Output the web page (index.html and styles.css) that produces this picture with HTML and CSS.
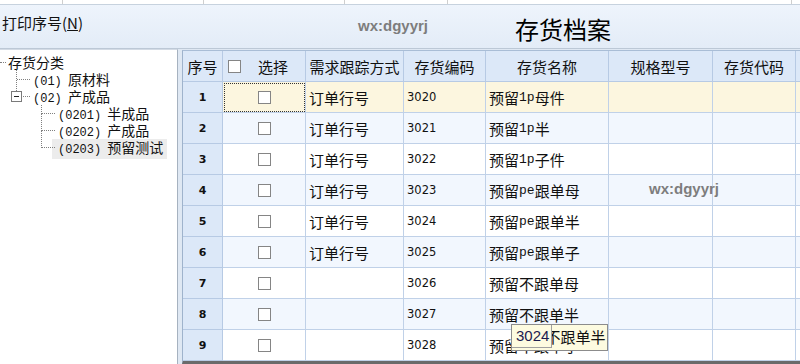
FILE: index.html
```html
<!DOCTYPE html>
<html lang="zh-CN">
<head>
    <meta charset="UTF-8">
    <title>存货档案</title>
    <link rel="stylesheet" href="styles.css">
</head>
<body>

    <div class="topstrip">
        <span></span><span></span><span></span><span></span><span></span>
    </div>

    <div class="toolbar">
        <span class="print-label">打印序号(<u>N</u>)</span>
        <span class="mark">wx:dgyyrj</span>
        <h1 class="title">存货档案</h1>
    </div>

    <div class="main">
        <div class="tree">
            <div class="node lv0">存货分类</div>
            <div class="node lv1 first"><span class="code">(01)</span> 原材料</div>
            <div class="node lv1"><i class="toggle"></i><span class="code">(02)</span> 产成品</div>
            <div class="node lv2 first"><span class="code">(0201)</span> 半成品</div>
            <div class="node lv2"><span class="code">(0202)</span> 产成品</div>
            <div class="node lv2"><span class="label selected"><span class="code">(0203)</span> 预留测试</span></div>
        </div>

        <div class="grid">
            <div class="row hd">
                <div>序号</div>
                <div class="sel"><span class="cb"></span><span class="sel-text">选择</span></div>
                <div>需求跟踪方式</div>
                <div>存货编码</div>
                <div>存货名称</div>
                <div>规格型号</div>
                <div>存货代码</div>
                <div></div>
            </div>

            <div class="row current">
                <div class="no">1</div>
                <div class="chk focus"><span class="cb"></span></div>
                <div>订单行号</div>
                <div class="num">3020</div>
                <div>预留<span class="lat">1p</span>母件</div>
                <div></div><div></div><div></div>
            </div>
            <div class="row alt">
                <div class="no">2</div>
                <div class="chk"><span class="cb"></span></div>
                <div>订单行号</div>
                <div class="num">3021</div>
                <div>预留<span class="lat">1p</span>半</div>
                <div></div><div></div><div></div>
            </div>
            <div class="row">
                <div class="no">3</div>
                <div class="chk"><span class="cb"></span></div>
                <div>订单行号</div>
                <div class="num">3022</div>
                <div>预留<span class="lat">1p</span>子件</div>
                <div></div><div></div><div></div>
            </div>
            <div class="row alt">
                <div class="no">4</div>
                <div class="chk"><span class="cb"></span></div>
                <div>订单行号</div>
                <div class="num">3023</div>
                <div>预留<span class="lat">pe</span>跟单母</div>
                <div></div><div></div><div></div>
            </div>
            <div class="row">
                <div class="no">5</div>
                <div class="chk"><span class="cb"></span></div>
                <div>订单行号</div>
                <div class="num">3024</div>
                <div>预留<span class="lat">pe</span>跟单半</div>
                <div></div><div></div><div></div>
            </div>
            <div class="row alt">
                <div class="no">6</div>
                <div class="chk"><span class="cb"></span></div>
                <div>订单行号</div>
                <div class="num">3025</div>
                <div>预留<span class="lat">pe</span>跟单子</div>
                <div></div><div></div><div></div>
            </div>
            <div class="row">
                <div class="no">7</div>
                <div class="chk"><span class="cb"></span></div>
                <div></div>
                <div class="num">3026</div>
                <div>预留不跟单母</div>
                <div></div><div></div><div></div>
            </div>
            <div class="row alt">
                <div class="no">8</div>
                <div class="chk"><span class="cb"></span></div>
                <div></div>
                <div class="num">3027</div>
                <div>预留不跟单半</div>
                <div></div><div></div><div></div>
            </div>
            <div class="row">
                <div class="no">9</div>
                <div class="chk"><span class="cb"></span></div>
                <div></div>
                <div class="num">3028</div>
                <div>预留不跟单子</div>
                <div></div><div></div><div></div>
            </div>

            <span class="mark mark2">wx:dgyyrj</span>

            <div class="tip">
                <span class="tip-code">3024</span>
                <span class="tip-rest"><span>不跟单半</span></span>
            </div>
        </div>
    </div>

</body>
</html>
```

FILE: styles.css
```css
body {
    margin: 0;
    width: 800px;
    height: 364px;
    overflow: hidden;
    font-family: "Noto Sans CJK SC", sans-serif;
    color: #111;
    background-color: #dfe8f3;
}

/* remnant of the grid above */
.topstrip {
    height: 4px;
    display: grid;
    grid-template-columns: 63px 141px 141px 103px 344px;
    background-color: #fff;
    border-bottom: 1px solid #c7d2de;
}

.topstrip span {
    border-right: 1px solid #cfcfcf;
}

.toolbar {
    height: 43px;
    display: grid;
    grid-template-columns: 356px 157px auto;
    align-items: start;
    padding-left: 2px;
    background: linear-gradient(#eef4fc, #e3ecf7);
    border-bottom: 1px solid #bcc8d6;
}

.print-label {
    font-size: 15px;
    line-height: 20px;
    margin-top: 8px;
}

.mark {
    font-family: "Liberation Sans", sans-serif;
    font-weight: bold;
    font-size: 15px;
    line-height: 20px;
    color: #7d7d7d;
    margin-top: 11px;
}

.title {
    margin: 9px 0 0;
    font-size: 24px;
    font-weight: normal;
    line-height: 30px;
    color: #000;
}

.main {
    display: flex;
    height: 315px;
}

/* category tree */
.tree {
    width: 177px;
    padding-top: 4px;
    background-color: #fff;
    border-top: 1px solid #d3dbe5;
    border-right: 1px solid #a6b2c0;
    font-size: 14px;
}

.node {
    position: relative;
    height: 17px;
    line-height: 17px;
    white-space: nowrap;
}

.node::before {
    content: "";
    position: absolute;
    top: 8px;
    border-top: 1px dotted #808080;
}

.node.lv1::after,
.node.lv2::after {
    content: "";
    position: absolute;
    top: -8px;
    height: 17px;
    border-left: 1px dotted #808080;
}

.lv0 {
    padding-left: 8px;
}

.lv0::before {
    left: 0;
    width: 6px;
}

.lv1 {
    padding-left: 33px;
}

.lv1::before {
    left: 17px;
    width: 13px;
}

.node.lv1::after {
    left: 16px;
}

.lv2 {
    padding-left: 58px;
}

.lv2::before {
    left: 42px;
    width: 13px;
}

.node.lv2::after {
    left: 41px;
}

.node.lv1.first::after {
    top: -1px;
    height: 9px;
}

.node.lv2.first::after {
    top: 0;
    height: 9px;
}

.toggle {
    position: absolute;
    left: 11px;
    top: 3px;
    width: 9px;
    height: 9px;
    border: 1px solid #7a7a7a;
    background-color: #fff;
    z-index: 1;
}

.toggle::after {
    content: "";
    position: absolute;
    left: 2px;
    top: 4px;
    width: 5px;
    height: 1px;
    background-color: #222;
}

.code {
    font-family: "Liberation Mono", monospace;
    font-size: 12px;
    margin-right: 3px;
}

.label.selected {
    display: inline-block;
    margin-left: -6px;
    padding: 0 4px 0 6px;
    background-color: #ececec;
}

/* data grid */
.grid {
    position: relative;
    flex: 1;
    margin-left: 4px;
    margin-top: 1px;
    overflow: hidden;
    background-color: #fff;
    border-left: 1px solid #9fb3cc;
    border-top: 1px solid #a9bdd6;
    border-bottom: 3px solid #6a6a6a;
}

.row {
    display: grid;
    grid-template-columns: 40px 83px 98px 82px 123px 104px 83px 100px;
    height: 31px;
    font-size: 15px;
}

.row > div {
    box-sizing: border-box;
    display: flex;
    align-items: center;
    padding-left: 3px;
    overflow: hidden;
    white-space: nowrap;
    border-right: 1px solid #c0d1e8;
    border-bottom: 1px solid #c0d1e8;
}

.row.alt > div {
    background-color: #f2f7fe;
}

.row.current > div {
    background-color: #fcf6df;
}

.row.hd > div {
    justify-content: center;
    padding-left: 0;
    background-color: #dce8f8;
    border-color: #b7cae4;
}

.row.hd > div.sel {
    justify-content: flex-start;
    padding-left: 5px;
}

.sel-text {
    margin-left: 17px;
}

.row > div.no {
    justify-content: center;
    padding-left: 0;
    background-color: #dce8f8;
    border-color: #b7cae4;
    font-family: "DejaVu Sans", sans-serif;
    font-weight: bold;
    font-size: 11px;
}

.row > div.chk {
    justify-content: center;
    padding-left: 0;
}

.row > div.focus {
    outline: 1px dotted #333;
    outline-offset: -2px;
}

.cb {
    box-sizing: border-box;
    width: 13px;
    height: 13px;
    border: 1px solid #858585;
    background-color: #fff;
}

.num {
    font-family: "DejaVu Sans", sans-serif;
    font-size: 11.5px;
}

.lat {
    font-family: "Liberation Mono", monospace;
    font-size: 13px;
}

.mark2 {
    position: absolute;
    left: 466px;
    top: 128px;
    margin: 0;
}

.tip {
    position: absolute;
    left: 328px;
    top: 273px;
    width: 95px;
    height: 25px;
    display: flex;
    align-items: flex-start;
    background-color: #fdfbe0;
    border: 1px solid #8c8c8c;
}

.tip-code {
    height: 22px;
    line-height: 22px;
    padding: 0 2px 0 4px;
    border-right: 1px solid #a0a0a0;
    border-bottom: 1px solid #a0a0a0;
    font-family: "Liberation Sans", sans-serif;
    font-size: 15px;
    color: #1c1c50;
}

.tip-rest {
    flex: 1;
    overflow: hidden;
    white-space: nowrap;
    font-size: 15px;
    line-height: 24px;
}

.tip-rest span {
    display: inline-block;
    margin-left: -7px;
}
```
